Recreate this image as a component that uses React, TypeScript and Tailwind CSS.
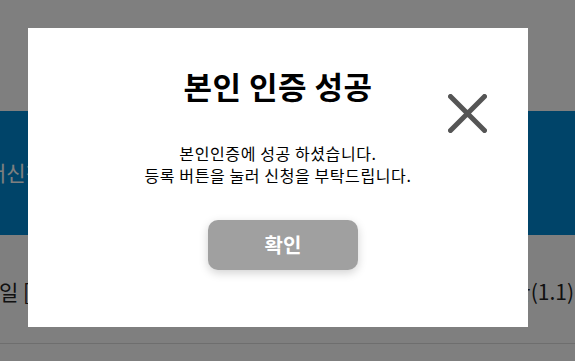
import React from "react";

const KR = { fontFamily: '"Noto Sans CJK KR", "Noto Sans", sans-serif' };

export default function App() {
  return (
    <div className="relative w-[575px] h-[361px] overflow-hidden bg-white" style={KR}>
      {/* background page */}
      <div className="flex flex-col w-full">
        <div className="h-[111px] bg-white" />
        <div className="h-[124px] bg-[#0089d2] flex items-center">
          <span className="ml-[-13px] text-[21px] text-white whitespace-nowrap">서신청 안내</span>
        </div>
        <div className="h-[94px] pt-[20px] flex items-center justify-between">
          <span className="ml-[-1px] text-[21px] text-[#222] whitespace-nowrap">일 [</span>
          <span className="mr-[1px] text-[21px] text-[#222] whitespace-nowrap">약관(1.1)</span>
        </div>
        <div className="h-[15px] border-b border-[#dddddd]" />
      </div>

      {/* overlay */}
      <div className="absolute inset-0 bg-black/50">
        <div className="relative ml-[28px] mt-[28px] w-[500px] h-[299px] bg-white flex flex-col items-center">
          <h1 className="mt-[38px] text-[31px] leading-[40px] font-bold text-black tracking-[0.5px]">본인 인증 성공</h1>
          <div className="mt-[36px] text-[16px] leading-[22px] text-black text-center tracking-[0.6px]">
            <p>본인인증에 성공 하셨습니다.</p>
            <p>등록 버튼을 눌러 신청을 부탁드립니다.</p>
          </div>
          <button className="mt-[34px] ml-[10px] w-[150px] h-[50px] rounded-[10px] bg-[#a0a0a0] text-white text-[20px] font-bold shadow-[0_3px_10px_rgba(0,0,0,0.18)]">
            확인
          </button>
          <button className="absolute left-[420px] top-[66px] w-[39px] h-[39px]" aria-label="close">
            <svg viewBox="0 0 39 39" width="39" height="39">
              <path d="M2.5 2.5 L36.5 36.5 M36.5 2.5 L2.5 36.5" stroke="#555555" strokeWidth="5" strokeLinecap="round" />
            </svg>
          </button>
        </div>
      </div>
    </div>
  );
}
